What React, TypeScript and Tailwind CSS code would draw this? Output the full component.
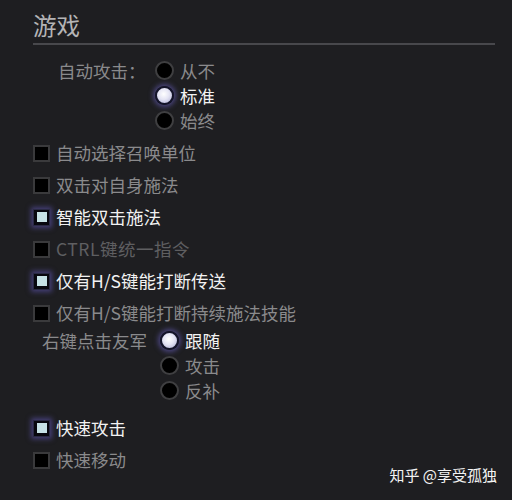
import * as React from 'react';

const font = { fontFamily: '"Noto Sans CJK SC", "Noto Sans", sans-serif' };

function Radio({ checked }: { checked: boolean }): React.ReactElement {
  return checked ? (
    <span className="w-[19px] h-[19px] rounded-full shrink-0 border-[2px] border-[#14142a] bg-[radial-gradient(circle_at_45%_40%,#ffffff_0%,#e4e4f4_45%,#a9a9cf_100%)] shadow-[0_0_5px_2px_rgba(110,100,200,0.55)]" />
  ) : (
    <span className="w-[19px] h-[19px] rounded-full shrink-0 border-[2px] border-[#3f3f41] bg-black" />
  );
}

function Checkbox({ checked }: { checked: boolean }): React.ReactElement {
  return checked ? (
    <span className="w-[17px] h-[17px] shrink-0 flex items-center justify-center bg-[#08080f] border border-[#2a2a44] shadow-[0_0_5px_2px_rgba(100,90,190,0.55)]">
      <span className="w-[10px] h-[10px] bg-[#c6e2e6]" />
    </span>
  ) : (
    <span className="w-[17px] h-[17px] shrink-0 bg-black border-[2px] border-[#3a3a3c]" />
  );
}

function CheckRow({ label, checked, dim, tracking }: { label: React.ReactNode; checked?: boolean; dim?: boolean; tracking?: boolean }): React.ReactElement {
  const color = checked ? 'text-[#f2f2f2]' : dim ? 'text-[#5f5f61]' : 'text-[#8a8a8c]';
  return (
    <div className="h-[32px] flex items-center gap-[6px]">
      <Checkbox checked={!!checked} />
      <span className={`text-[17.5px] leading-none ${color} ${tracking ? 'tracking-[0.5px]' : ''}`}>{label}</span>
    </div>
  );
}

function RadioGroup({ label, labelClass, options, selected }: { label: string; labelClass: string; options: string[]; selected: number }): React.ReactElement {
  return (
    <div className="flex">
      <div className={`h-[25px] flex items-center text-[17.5px] leading-none text-[#8a8a8c] ${labelClass}`}>{label}</div>
      <div className="flex flex-col">
        {options.map((o, i) => (
          <div key={o} className="h-[25px] flex items-center gap-[6px]">
            <Radio checked={i === selected} />
            <span className={`text-[17.5px] leading-none ${i === selected ? 'text-[#f2f2f2]' : 'text-[#8a8a8c]'}`}>{o}</span>
          </div>
        ))}
      </div>
    </div>
  );
}

export default function App(): React.ReactElement {
  return (
    <div className="relative w-[512px] h-[500px] overflow-hidden bg-[#1e1e21]" style={font}>
      <div className="flex flex-col pl-[33px] pr-[17px] pt-[12px]">
        <div className="h-[28px] flex items-center text-[23.5px] leading-none text-[#b4b4b6]">游戏</div>
        <div className="mt-[3px] h-[2px] bg-[#48484c]" />

        <div className="mt-[13px]">
          <RadioGroup label="自动攻击：" labelClass="ml-[25px] w-[97px]" options={['从不', '标准', '始终']} selected={1} />
        </div>

        <div className="mt-[4px] flex flex-col">
          <CheckRow label="自动选择召唤单位" />
          <CheckRow label="双击对自身施法" />
          <CheckRow label="智能双击施法" checked />
          <CheckRow label="CTRL键统一指令" dim tracking />
          <CheckRow label="仅有H/S键能打断传送" checked />
          <CheckRow label="仅有H/S键能打断持续施法技能" />
        </div>

        <div className="mt-[-1px]">
          <RadioGroup label="右键点击友军" labelClass="ml-[9px] w-[118px]" options={['跟随', '攻击', '反补']} selected={0} />
        </div>

        <div className="mt-[9px] flex flex-col">
          <CheckRow label="快速攻击" checked />
          <CheckRow label="快速移动" />
        </div>
      </div>

      <div className="absolute right-[15px] top-[465px] text-[15px] leading-[20px] text-[#f4f4f4]">知乎 @享受孤独</div>
    </div>
  );
}
